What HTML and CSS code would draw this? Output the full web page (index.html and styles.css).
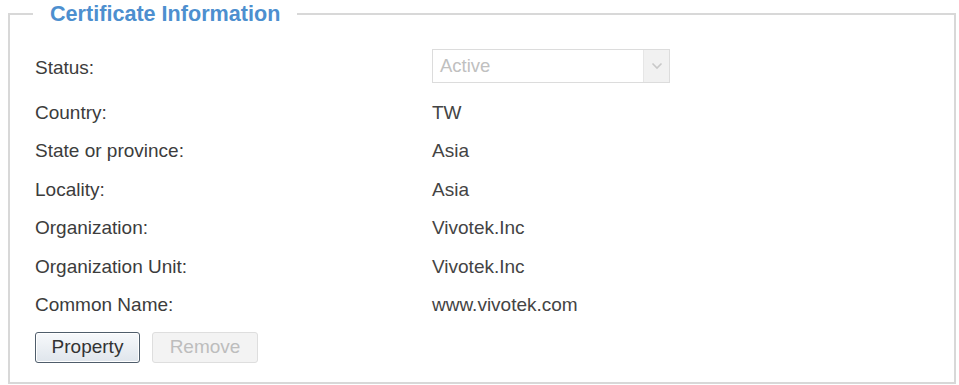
FILE: index.html
```html
<!DOCTYPE html>
<html lang="en">
<head>
    <meta charset="UTF-8">
    <title>Certificate Information</title>
<link rel="stylesheet" href="styles.css">
</head>
<body>
   <fieldset class="cert-box">
    <legend class="cert-title">Certificate Information</legend>
    <div class="cert-rows">
        <div class="row status-row">
            <span class="label">Status:</span>
            <div class="select disabled">
                <span class="select-text">Active</span>
                <span class="select-arrow">
                    <svg width="12" height="8" viewBox="0 0 12 8"><path d="M1.5 1.5 L6 6 L10.5 1.5" fill="none" stroke="#c8c8c8" stroke-width="1.6"/></svg>
                </span>
            </div>
        </div>
        <div class="row"><span class="label">Country:</span><span class="value">TW</span></div>
        <div class="row"><span class="label">State or province:</span><span class="value">Asia</span></div>
        <div class="row"><span class="label">Locality:</span><span class="value">Asia</span></div>
        <div class="row"><span class="label">Organization:</span><span class="value">Vivotek.Inc</span></div>
        <div class="row"><span class="label">Organization Unit:</span><span class="value">Vivotek.Inc</span></div>
        <div class="row"><span class="label">Common Name:</span><span class="value">www.vivotek.com</span></div>
    </div>
    <div class="buttons">
        <button class="button">Property</button>
        <button class="button" disabled>Remove</button>
    </div>
   </fieldset>
</body>
</html>
```

FILE: styles.css
```css
body {
    margin: 0;
    background: #fff;
    font-family: "Liberation Sans", Arial, sans-serif;
    color: #3a3a3a;
}
.cert-box {
    margin: 2px 3px 0 8px;
    padding: 0 0 19px 0;
    border: 2px solid #d8d8d8;
}
.cert-title {
    margin-left: 23px;
    padding: 0 17px;
    font-size: 21.6px;
    line-height: 24px;
    font-weight: bold;
    color: #4d8fcf;
}
.cert-rows {
    padding: 22.8px 0 0 25px;
}
.row {
    display: grid;
    grid-template-columns: 397px 1fr;
    align-items: center;
    height: 38.4px;
    font-size: 19px;
}
.status-row {
    margin-bottom: 6.6px;
}
.label {
    color: #3c3c3c;
}
.value {
    color: #444;
}
.select {
    display: flex;
    width: 238px;
    height: 34px;
    margin-top: -4px;
    border: 1px solid #dcdcdc;
    box-sizing: border-box;
    background: #fff;
}
.select-text {
    flex: 1;
    padding-left: 7px;
    line-height: 32px;
    font-size: 18.5px;
    color: #c0c0c0;
}
.select-arrow {
    width: 25px;
    display: flex;
    align-items: center;
    justify-content: center;
    background: #f1f1f1;
    border-left: 1px solid #e6e6e6;
}
.buttons {
    display: flex;
    gap: 12px;
    padding: 7.8px 0 0 25px;
}
.button {
    width: 105px;
    height: 31px;
    padding: 0;
    font-family: "Liberation Sans", Arial, sans-serif;
    font-size: 19px;
    color: #333;
    border: 1px solid #4f5d6b;
    border-radius: 3px;
    background: linear-gradient(#f7f9fb, #dfe5ec);
    box-shadow: inset 0 0 0 1px #fff;
}
.button:disabled {
    width: 106px;
    color: #bdbdbd;
    border-color: #dedede;
    background: #f3f3f3;
    box-shadow: none;
}
```
